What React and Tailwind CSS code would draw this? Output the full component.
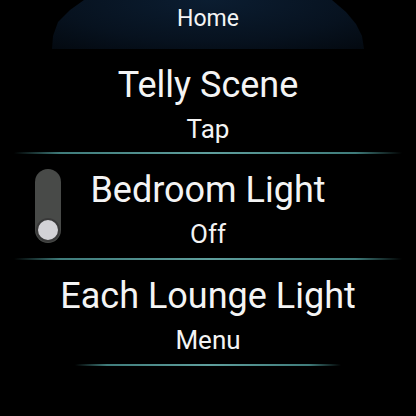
export default function App() {
  const line =
    "h-[2px] bg-[linear-gradient(to_right,transparent,#3f7c7b_12%,#5f9f9d_50%,#3f7c7b_88%,transparent)]";

  return (
    <div
      className="w-[416px] h-[416px] bg-black text-[#f4f4f4] overflow-hidden flex flex-col"
      style={{ fontFamily: "Roboto, 'Noto Sans', sans-serif" }}
    >
      {/* header */}
      <div className="h-[49px] flex items-center justify-center bg-[radial-gradient(ellipse_60%_140%_at_50%_0%,#0b1d31,#07121f_60%,#03080e)] [clip-path:polygon(84px_0,332px_0,346px_12px,356px_24px,362px_36px,364px_49px,52px_49px,53px_36px,58px_22px,70px_10px)]">
        <span className="text-[23px] leading-none -mt-[12px]">Home</span>
      </div>

      {/* Telly Scene */}
      <div className="h-[103px] pt-[8px] flex flex-col items-center justify-center">
        <div className="text-[36px] leading-[40px]">Telly Scene</div>
        <div className="text-[26px] leading-[32px] mt-[8px]">Tap</div>
      </div>
      <div className={`mx-[14px] ${line}`} />

      {/* Bedroom Light */}
      <div className="h-[104px] grid grid-cols-[1fr_auto_1fr] items-center">
        <div className="pl-[35px]">
          <div className="w-[26px] h-[74px] rounded-full bg-[#484a48] flex flex-col justify-end items-center pb-[1px]">
            <div className="w-[24px] h-[24px] rounded-full bg-[#d3d2d6] border-2 border-[#3a3a3a]" />
          </div>
        </div>
        <div className="pt-[8px] flex flex-col items-center">
          <div className="text-[36px] leading-[40px]">Bedroom Light</div>
          <div className="text-[26px] leading-[32px] mt-[8px]">Off</div>
        </div>
        <div />
      </div>
      <div className={`mx-[14px] ${line}`} />

      {/* Each Lounge Light */}
      <div className="h-[104px] pt-[8px] flex flex-col items-center justify-center">
        <div className="text-[36px] leading-[40px]">Each Lounge Light</div>
        <div className="text-[26px] leading-[32px] mt-[8px]">Menu</div>
      </div>
      <div className={`mx-[75px] ${line}`} />
    </div>
  );
}
